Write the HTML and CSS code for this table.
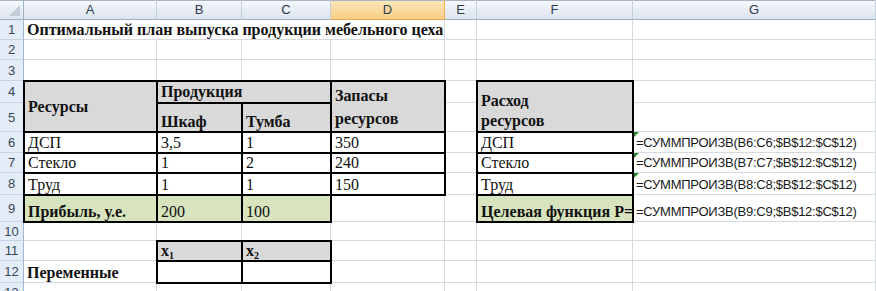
FILE: index.html
```html
<!DOCTYPE html>
<html lang="ru">
<head>
    <meta charset="UTF-8">
    <title>Оптимальный план выпуска продукции</title>
    <link rel="stylesheet" href="styles.css">
</head>
<body>
    <div class="sheet">
        <!-- column headers -->
        <div class="corner"></div>
        <div class="ch">A</div>
        <div class="ch">B</div>
        <div class="ch">C</div>
        <div class="ch sel">D</div>
        <div class="ch">E</div>
        <div class="ch">F</div>
        <div class="ch">G</div>

        <!-- row 1 -->
        <div class="rh">1</div>
        <div class="c bold title">Оптимальный план выпуска продукции мебельного цеха</div>
        <div class="c"></div>
        <div class="c"></div>
        <div class="c"></div>

        <!-- row 2 -->
        <div class="rh">2</div>
        <div class="c"></div><div class="c"></div><div class="c"></div><div class="c"></div><div class="c"></div><div class="c"></div><div class="c"></div>

        <!-- row 3 -->
        <div class="rh">3</div>
        <div class="c"></div><div class="c"></div><div class="c"></div><div class="c"></div><div class="c"></div><div class="c"></div><div class="c"></div>

        <!-- row 4 (with merged cells down into row 5) -->
        <div class="rh">4</div>
        <div class="c b gray bold span-rows mid">Ресурсы</div>
        <div class="c b gray bold span-cols">Продукция</div>
        <div class="c b gray bold span-rows wrap stock">Запасы<br>ресурсов</div>
        <div class="c"></div>
        <div class="c b gray bold span-rows wrap usage">Расход<br>ресурсов</div>
        <div class="c"></div>

        <!-- row 5 -->
        <div class="rh">5</div>
        <div class="c b gray bold">Шкаф</div>
        <div class="c b gray bold">Тумба</div>
        <div class="c"></div>
        <div class="c"></div>

        <!-- row 6 -->
        <div class="rh">6</div>
        <div class="c b">ДСП</div>
        <div class="c b">3,5</div>
        <div class="c b">1</div>
        <div class="c b">350</div>
        <div class="c"></div>
        <div class="c b">ДСП</div>
        <div class="c formula err">=СУММПРОИЗВ(B6:C6;$B$12:$C$12)</div>

        <!-- row 7 -->
        <div class="rh">7</div>
        <div class="c b">Стекло</div>
        <div class="c b">1</div>
        <div class="c b">2</div>
        <div class="c b">240</div>
        <div class="c"></div>
        <div class="c b">Стекло</div>
        <div class="c formula err">=СУММПРОИЗВ(B7:C7;$B$12:$C$12)</div>

        <!-- row 8 -->
        <div class="rh">8</div>
        <div class="c b">Труд</div>
        <div class="c b">1</div>
        <div class="c b">1</div>
        <div class="c b">150</div>
        <div class="c"></div>
        <div class="c b">Труд</div>
        <div class="c formula err">=СУММПРОИЗВ(B8:C8;$B$12:$C$12)</div>

        <!-- row 9 -->
        <div class="rh">9</div>
        <div class="c b green bold">Прибыль, у.е.</div>
        <div class="c b green">200</div>
        <div class="c b green">100</div>
        <div class="c"></div>
        <div class="c"></div>
        <div class="c b green bold">Целевая функция Р=</div>
        <div class="c formula">=СУММПРОИЗВ(B9:C9;$B$12:$C$12)</div>

        <!-- row 10 -->
        <div class="rh">10</div>
        <div class="c"></div><div class="c"></div><div class="c"></div><div class="c"></div><div class="c"></div><div class="c"></div><div class="c"></div>

        <!-- row 11 -->
        <div class="rh">11</div>
        <div class="c"></div>
        <div class="c b gray bold"><span>x<sub>1</sub></span></div>
        <div class="c b gray bold"><span>x<sub>2</sub></span></div>
        <div class="c"></div><div class="c"></div><div class="c"></div><div class="c"></div>

        <!-- row 12 -->
        <div class="rh">12</div>
        <div class="c bold">Переменные</div>
        <div class="c b"></div>
        <div class="c b"></div>
        <div class="c"></div><div class="c"></div><div class="c"></div><div class="c"></div>

        <!-- row 13 -->
        <div class="rh">13</div>
        <div class="c"></div><div class="c"></div><div class="c"></div><div class="c"></div><div class="c"></div><div class="c"></div><div class="c"></div>
    </div>
</body>
</html>
```

FILE: styles.css
```css
/* Page */
body {
    margin: 0;
    background: #fff;
    overflow: hidden;
}

/* Worksheet grid: row header + columns A..G */
.sheet {
    display: grid;
    grid-template-columns: 24px 133px 85px 89px 114px 32px 156px 243px;
    grid-template-rows: 20px 20px 20px 21px 22px 29px 21px 20px 22px 27px 19px 20px 22px 20px;
    font-family: "Liberation Serif", "Times New Roman", serif;
    font-size: 16px;
    color: #111;
}

/* Column headers */
.ch,
.corner {
    box-sizing: border-box;
    background: linear-gradient(#f7f9fc, #dce4ee);
    border-right: 1px solid #c5cfdb;
    border-bottom: 1px solid #9fb1c5;
    box-shadow: inset 0 1px #a9b5c4;
    font-family: "Liberation Sans", Arial, sans-serif;
    font-size: 13px;
    color: #2c3b4d;
    text-align: center;
    line-height: 20px;
}

.ch.sel {
    background: linear-gradient(#fce7bd, #f8cf84);
    border-right-color: #f0b25a;
    border-bottom-color: #f0a648;
}

.corner {
    position: relative;
    border-right-color: #9fb1c5;
}

.corner::after {
    content: "";
    position: absolute;
    right: 3px;
    bottom: 3px;
    border-left: 11px solid transparent;
    border-bottom: 11px solid #c3cedb;
}

/* Row headers */
.rh {
    box-sizing: border-box;
    background: #e4ecf7;
    border-right: 1px solid #9fb6ce;
    border-bottom: 1px solid #c5d3e3;
    font-family: "Liberation Sans", Arial, sans-serif;
    font-size: 13px;
    color: #34465a;
    display: flex;
    align-items: center;
    justify-content: center;
}

/* Cells */
.c {
    box-sizing: border-box;
    position: relative;
    min-width: 0;
    display: flex;
    align-items: flex-end;
    padding: 0 3px;
    line-height: 18px;
    white-space: nowrap;
    border-right: 1px solid #d6dae0;
    border-bottom: 1px solid #d6dae0;
}

/* medium black border around a cell */
.c.b {
    border: 2px solid #000;
    margin: -1px;
    z-index: 1;
}

.gray {
    background: #d9d9d9;
}

.green {
    background: #d7e4bd;
}

.bold {
    font-weight: bold;
}

.title {
    grid-column: span 4;
    border-right: 1px solid #d6dae0;
}

.span-rows {
    grid-row: span 2;
}

.span-cols {
    grid-column: span 2;
    align-items: center;
}

.mid {
    align-items: center;
}

.wrap {
    white-space: normal;
}

.stock {
    align-items: center;
    line-height: 23px;
}

.usage {
    line-height: 20px;
}

sub {
    font-size: 10px;
    line-height: 0;
    vertical-align: -3px;
}

/* Formula text, shown in the default UI font */
.formula {
    font-family: "Liberation Sans", Arial, sans-serif;
    font-size: 13px;
    letter-spacing: -0.25px;
    color: #1a1a1a;
}

/* green error indicator in the top-left corner */
.err::before {
    content: "";
    position: absolute;
    left: 1px;
    top: 0;
    border-top: 5px solid #2d8a2d;
    border-right: 5px solid transparent;
}
```
